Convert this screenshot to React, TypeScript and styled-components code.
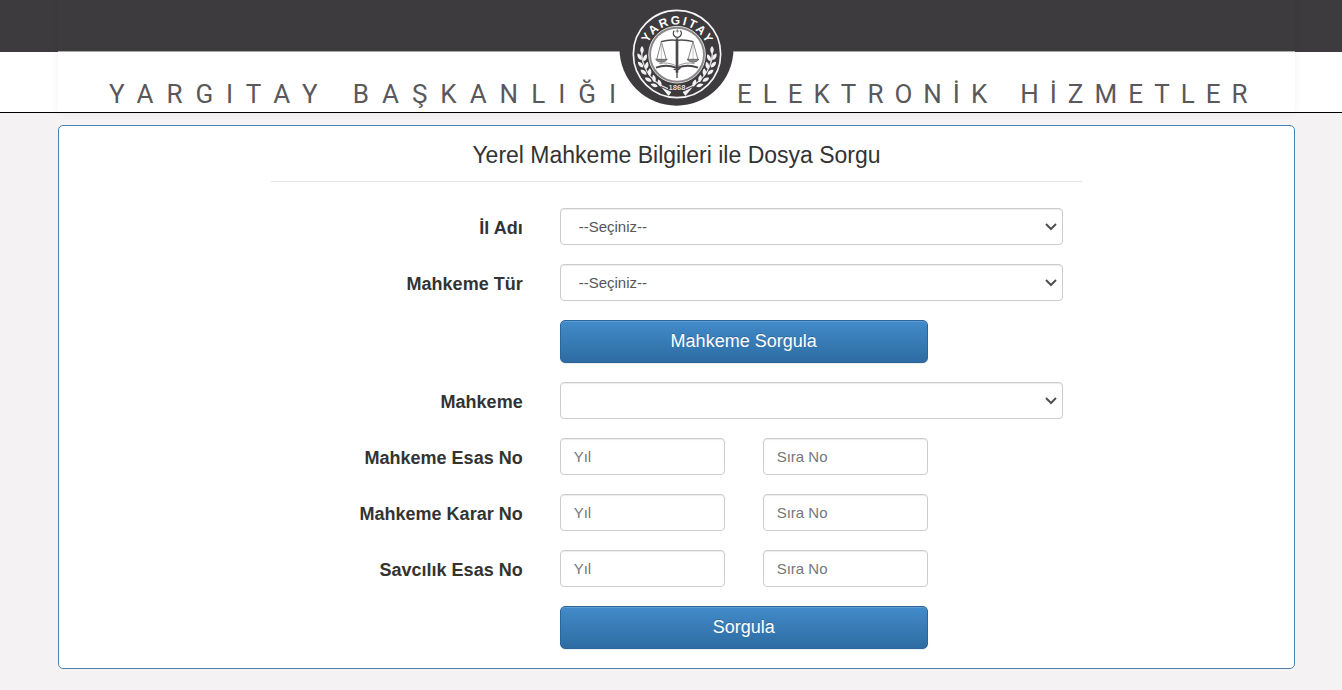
import React from "react";
import styled, { createGlobalStyle } from "styled-components";

const GlobalStyle = createGlobalStyle`
  *, *::before, *::after { box-sizing: border-box; }
  body {
    margin: 0;
    background: #f4f2f3;
    color: #333;
    font-family: "Liberation Sans", Arial, Helvetica, sans-serif;
  }
`;

const Header = styled.header`
  height: 113px;
  padding: 0 47px 0 58px;
  border-bottom: 1px solid #000;
  background: linear-gradient(#3e3b3e 52px, #fff 52px);
`;

const Banner = styled.div`
  display: grid;
  grid-template-columns: 1fr 115px 1fr;
  gap: 3px;
  height: 112px;
  background: linear-gradient(#3e3b3e 51px, #a9a8a9 51px, #a9a8a9 52px, #fff 52px);
  box-shadow: 0 0 8px rgba(0, 0, 0, 0.06);
`;

const BannerText = styled.div<{ $end?: boolean }>`
  display: flex;
  align-items: flex-end;
  justify-content: ${(p) => (p.$end ? "flex-end" : "flex-start")};
  gap: 22px;
  padding-bottom: 2px;
  color: #5a585b;
  font-family: Roboto, sans-serif;
  font-size: 26px;
  font-weight: 400;
  line-height: 32px;
  white-space: nowrap;
`;

const BannerWord = styled.span<{ $tracking: number }>`
  letter-spacing: ${(p) => p.$tracking}px;
  &:last-child { margin-right: -${(p) => p.$tracking}px; }
`;

const EmblemSvg = styled.svg`
  display: block;
  width: 115px;
  height: 107px;
`;

const Main = styled.main`
  margin: 12px 47px 21px 58px;
  padding: 14px 16px 19px;
  border: 1px solid #4682b4;
  border-radius: 5px;
  background: #fff;
`;

const Form = styled.form`
  display: flex;
  flex-direction: column;
  gap: 19px;
  max-width: 811px;
  margin: 0 auto;
`;

const Title = styled.h1`
  margin: 0 0 7px;
  padding-bottom: 10px;
  border-bottom: 1px solid #e5e5e5;
  font-size: 23px;
  font-weight: 400;
  line-height: 31px;
  text-align: center;
`;

const Row = styled.div`
  display: grid;
  grid-template-columns: 1fr 2fr;
  gap: 37px;
  padding-right: 19px;
`;

const Label = styled.label`
  padding-top: 8px;
  font-size: 18px;
  font-weight: 700;
  line-height: 24px;
  text-align: right;
`;

const Pair = styled.div`
  display: grid;
  grid-template-columns: 1fr 1fr;
  gap: 38px;
  max-width: 368px;
`;

const Input = styled.input`
  width: 100%;
  height: 37px;
  padding: 6px 13px;
  border: 1px solid #ccc;
  border-radius: 4px;
  background: #fff;
  box-shadow: inset 0 1px 1px rgba(0, 0, 0, 0.08);
  color: #555;
  font-family: inherit;
  font-size: 15px;
  line-height: 22px;
  &::placeholder { color: #777; opacity: 1; }
`;

const SelectBox = styled.div`
  display: grid;
  align-items: center;
  & > * { grid-area: 1 / 1; }
`;

const Select = styled.select`
  width: 100%;
  height: 37px;
  padding: 6px 18px;
  border: 1px solid #ccc;
  border-radius: 4px;
  appearance: none;
  background: #fff;
  box-shadow: inset 0 1px 1px rgba(0, 0, 0, 0.08);
  color: #555;
  font-family: inherit;
  font-size: 15px;
`;

const Chevron = styled.svg`
  justify-self: end;
  width: 12px;
  height: 8px;
  margin-right: 6px;
  pointer-events: none;
`;

const Button = styled.button`
  grid-column: 2;
  width: 100%;
  max-width: 368px;
  height: 43px;
  padding: 0 0 2px;
  border: 1px solid #2b669a;
  border-radius: 5px;
  background: linear-gradient(#428bca, #2d6ca2);
  box-shadow: inset 0 1px 0 rgba(255, 255, 255, 0.15), 0 1px 1px rgba(0, 0, 0, 0.08);
  color: #fff;
  font-family: inherit;
  font-size: 18px;
  line-height: 24px;
  text-shadow: 0 -1px 0 rgba(0, 0, 0, 0.2);
`;

/* Leaves of one laurel branch: position and rotation of each. */
const leaves: [number, number, number][] = [
  [126, 150, 0],
  [119, 171, -32],
  [135, 174, 24],
  [122, 194, -42],
  [140, 197, 12],
  [131, 217, -52],
  [149, 217, 2],
  [145, 239, -62],
  [162, 236, -10],
  [163, 256, -72],
  [179, 250, -22],
];

const Laurel = () => (
  <g>
    <path d="M126 148C121 188 144 244 204 266" fill="none" stroke="#ddd" strokeWidth="4" />
    {leaves.map(([x, y, r]) => (
      <path
        key={`${x}-${y}`}
        d="M0 -12C7 -5 7 5 0 11C-7 5 -7 -5 0 -12Z"
        fill="#f2f2f2"
        transform={`translate(${x} ${y}) rotate(${r})`}
      />
    ))}
    <path d="M184 262L214 276L206 288Z" fill="#f2f2f2" />
  </g>
);

const Emblem = () => (
  <EmblemSvg viewBox="57 0 345 321" role="img" aria-label="Yargıtay 1868">
    <circle cx="229.5" cy="146" r="171" fill="#3e3b3e" />
    <circle cx="231" cy="162" r="131" fill="#3e3b3e" stroke="#f4f4f4" strokeWidth="5" />
    <Laurel />
    <g transform="translate(462 0) scale(-1 1)">
      <Laurel />
    </g>
    <circle cx="231" cy="164" r="85" fill="#888" stroke="#d8d8d8" strokeWidth="3" />
    <circle cx="231" cy="164" r="78" fill="#fff" />
    <path id="emblem-arc" d="M137 182A95 95 0 1 1 325 182" fill="none" />
    <text
      fill="#fff"
      fontFamily="Liberation Sans, Arial, sans-serif"
      fontSize="36"
      fontWeight="700"
      letterSpacing="6"
      textAnchor="middle"
    >
      <textPath href="#emblem-arc" startOffset="51%">YARGITAY</textPath>
    </text>
    <text
      x="231"
      y="271"
      fill="#ddd"
      fontFamily="Liberation Sans, Arial, sans-serif"
      fontSize="23"
      fontWeight="700"
      textAnchor="middle"
    >
      1868
    </text>
    <g fill="none" stroke="#4a484b">
      <path d="M223 92A12 12 0 1 0 241 92" strokeWidth="4" />
      <path d="M232 88v10M227 93h10" strokeWidth="2" />
      <path d="M183 125Q207 118 231 121Q255 118 280 125" strokeWidth="4" />
      <path d="M231 115V218" strokeWidth="8" />
      <path d="M231 216V234" strokeWidth="4" />
      <path d="M221 208H236L241 203" strokeWidth="4" />
      <path d="M184 125L170 179M184 125L199 179M279 125L264 179M279 125L294 179" strokeWidth="2" />
      <path d="M184 125V179M279 125V179" stroke="#aaa" strokeWidth="2" />
      <path d="M167 178H202Q196 187 184 187Q173 187 167 178ZM261 178H297Q291 187 279 187Q267 187 261 178Z" fill="#8a888a" strokeWidth="2" />
      <path d="M178 191Q203 185 228 197M284 191Q259 185 234 197" stroke="#999" strokeWidth="3" />
      <path d="M168 203Q199 192 228 203M294 203Q263 192 234 203" strokeWidth="6" />
    </g>
  </EmblemSvg>
);

type SelectRowProps = { id: string; label: string; placeholder: string };

const SelectRow = ({ id, label, placeholder }: SelectRowProps) => (
  <Row>
    <Label htmlFor={id}>{label}</Label>
    <SelectBox>
      <Select id={id} defaultValue="">
        <option value="">{placeholder}</option>
      </Select>
      <Chevron viewBox="0 0 12 8" aria-hidden="true">
        <path d="M1 1L6 6L11 1" fill="none" stroke="#505050" strokeWidth="2" />
      </Chevron>
    </SelectBox>
  </Row>
);

const NumberRow = ({ id, label }: { id: string; label: string }) => (
  <Row>
    <Label htmlFor={`${id}-yil`}>{label}</Label>
    <Pair>
      <Input id={`${id}-yil`} type="text" placeholder="Yıl" />
      <Input id={`${id}-sira`} type="text" placeholder="Sıra No" aria-label={`${label} Sıra No`} />
    </Pair>
  </Row>
);

export default function App() {
  return (
    <>
      <GlobalStyle />
      <Header>
        <Banner>
          <BannerText $end>
            <BannerWord $tracking={13}>YARGITAY</BannerWord>
            <BannerWord $tracking={13}>BAŞKANLIĞI</BannerWord>
          </BannerText>
          <Emblem />
          <BannerText>
            <BannerWord $tracking={11}>ELEKTRONİK</BannerWord>
            <BannerWord $tracking={11}>HİZMETLER</BannerWord>
          </BannerText>
        </Banner>
      </Header>
      <Main>
        <Form onSubmit={(e) => e.preventDefault()}>
          <Title>Yerel Mahkeme Bilgileri ile Dosya Sorgu</Title>
          <SelectRow id="il" label="İl Adı" placeholder="--Seçiniz--" />
          <SelectRow id="tur" label="Mahkeme Tür" placeholder="--Seçiniz--" />
          <Row>
            <Button type="button">Mahkeme Sorgula</Button>
          </Row>
          <SelectRow id="mahkeme" label="Mahkeme" placeholder="" />
          <NumberRow id="esas" label="Mahkeme Esas No" />
          <NumberRow id="karar" label="Mahkeme Karar No" />
          <NumberRow id="savcilik" label="Savcılık Esas No" />
          <Row>
            <Button type="submit">Sorgula</Button>
          </Row>
        </Form>
      </Main>
    </>
  );
}
